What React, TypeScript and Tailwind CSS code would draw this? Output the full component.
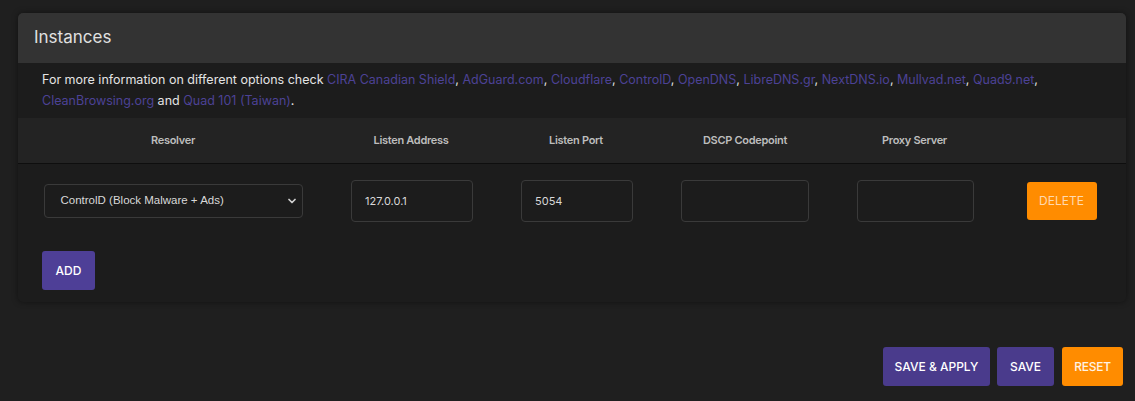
import { ChevronDown } from "lucide-react";

const links = [
  "CIRA Canadian Shield",
  "AdGuard.com",
  "Cloudflare",
  "ControlD",
  "OpenDNS",
  "LibreDNS.gr",
  "NextDNS.io",
  "Mullvad.net",
  "Quad9.net",
  "CleanBrowsing.org",
];

const headers = ["Resolver", "Listen Address", "Listen Port", "DSCP Codepoint", "Proxy Server", ""];

function Link({ children }: { children: React.ReactNode }) {
  return <a className="cursor-pointer text-[#4c4296]">{children}</a>;
}

export default function App() {
  return (
    <div
      className="min-h-[401px] w-[1135px] bg-[#1f1f1f] pt-[13px] text-[#d6d6d6]"
      style={{ fontFamily: "Inter, 'Noto Sans', sans-serif" }}
    >
      <div className="ml-[18px] w-[1108px] overflow-hidden rounded-[5px] bg-[#1c1c1c] shadow-[0_0_6px_rgba(0,0,0,0.45)]">
        <div className="flex h-[50px] items-center bg-[#333333] px-4">
          <h3 className="text-[17px] font-normal text-[#e0e0e0]">Instances</h3>
        </div>

        <p className="px-6 pt-[6px] text-[12.5px] leading-[21px] text-[#e4e4e4]">
          For more information on different options check{" "}
          {links.slice(0, 9).map((l) => (
            <span key={l}>
              <Link>{l}</Link>,{" "}
            </span>
          ))}
          <Link>{links[9]}</Link> and <Link>Quad 101 (Taiwan)</Link>.
        </p>

        <div className="mt-[7px] grid grid-cols-[310px_166px_164px_174px_165px_129px] border-b border-[#0e0e0e] bg-[#232323]">
          {headers.map((h, i) => (
            <div
              key={i}
              className="flex h-[45px] items-center justify-center text-[11px] font-semibold tracking-[-0.3px] text-[#bdbdbd]"
            >
              {h}
            </div>
          ))}
        </div>

        <div className="grid h-[74px] grid-cols-[310px_166px_164px_174px_165px_129px] items-center">
          <div className="flex justify-center">
            <div className="flex h-[34px] w-[259px] items-center justify-between rounded-[4px] border border-[#3a3a3a] pl-4 pr-[4px] text-[#d8d8d8]">
              <span
                className="text-[11.5px]"
                style={{ fontFamily: "'Liberation Sans', Arial, sans-serif" }}
              >
                ControlD (Block Malware + Ads)
              </span>
              <ChevronDown size={12} strokeWidth={3.5} className="text-[#d0d0d0]" />
            </div>
          </div>
          <div className="flex justify-center">
            <div className="ml-[2px] flex h-[42px] w-[122px] items-center rounded-[4px] border border-[#3a3a3a] px-[13px] text-[11px] text-[#d8d8d8]">
              127.0.0.1
            </div>
          </div>
          <div className="flex justify-center">
            <div className="ml-[2px] flex h-[42px] w-[112px] items-center rounded-[4px] border border-[#3a3a3a] px-[13px] text-[11px] text-[#d8d8d8]">
              5054
            </div>
          </div>
          <div className="flex justify-center">
            <div className="h-[42px] w-[128px] rounded-[4px] border border-[#3a3a3a]" />
          </div>
          <div className="flex justify-center">
            <div className="ml-[2px] h-[42px] w-[117px] rounded-[4px] border border-[#3a3a3a]" />
          </div>
          <div className="flex justify-center">
            <button className="h-[38px] w-[70px] rounded-[3px] bg-[#ff8c00] text-[12px] text-[#ffd9ae]">
              DELETE
            </button>
          </div>
        </div>

        <div className="px-6 pt-[13px] pb-3">
          <button className="h-[39px] w-[53px] rounded-[3px] bg-[#4e3f97] text-[12px] font-medium text-white">
            ADD
          </button>
        </div>
      </div>

      <div className="mt-[45px] flex justify-end pr-3">
        <button className="h-[39px] w-[107px] rounded-[3px] bg-[#4a3b8c] text-[12px] font-medium text-white">
          SAVE &amp; APPLY
        </button>
        <button className="ml-[7px] h-[39px] w-[57px] rounded-[3px] bg-[#4a3b8c] text-[12px] font-medium text-white">
          SAVE
        </button>
        <button className="ml-[8px] h-[39px] w-[61px] rounded-[3px] bg-[#ff8c00] text-[12px] font-medium tracking-[-0.3px] text-[#fff3e4]">
          RESET
        </button>
      </div>
    </div>
  );
}
